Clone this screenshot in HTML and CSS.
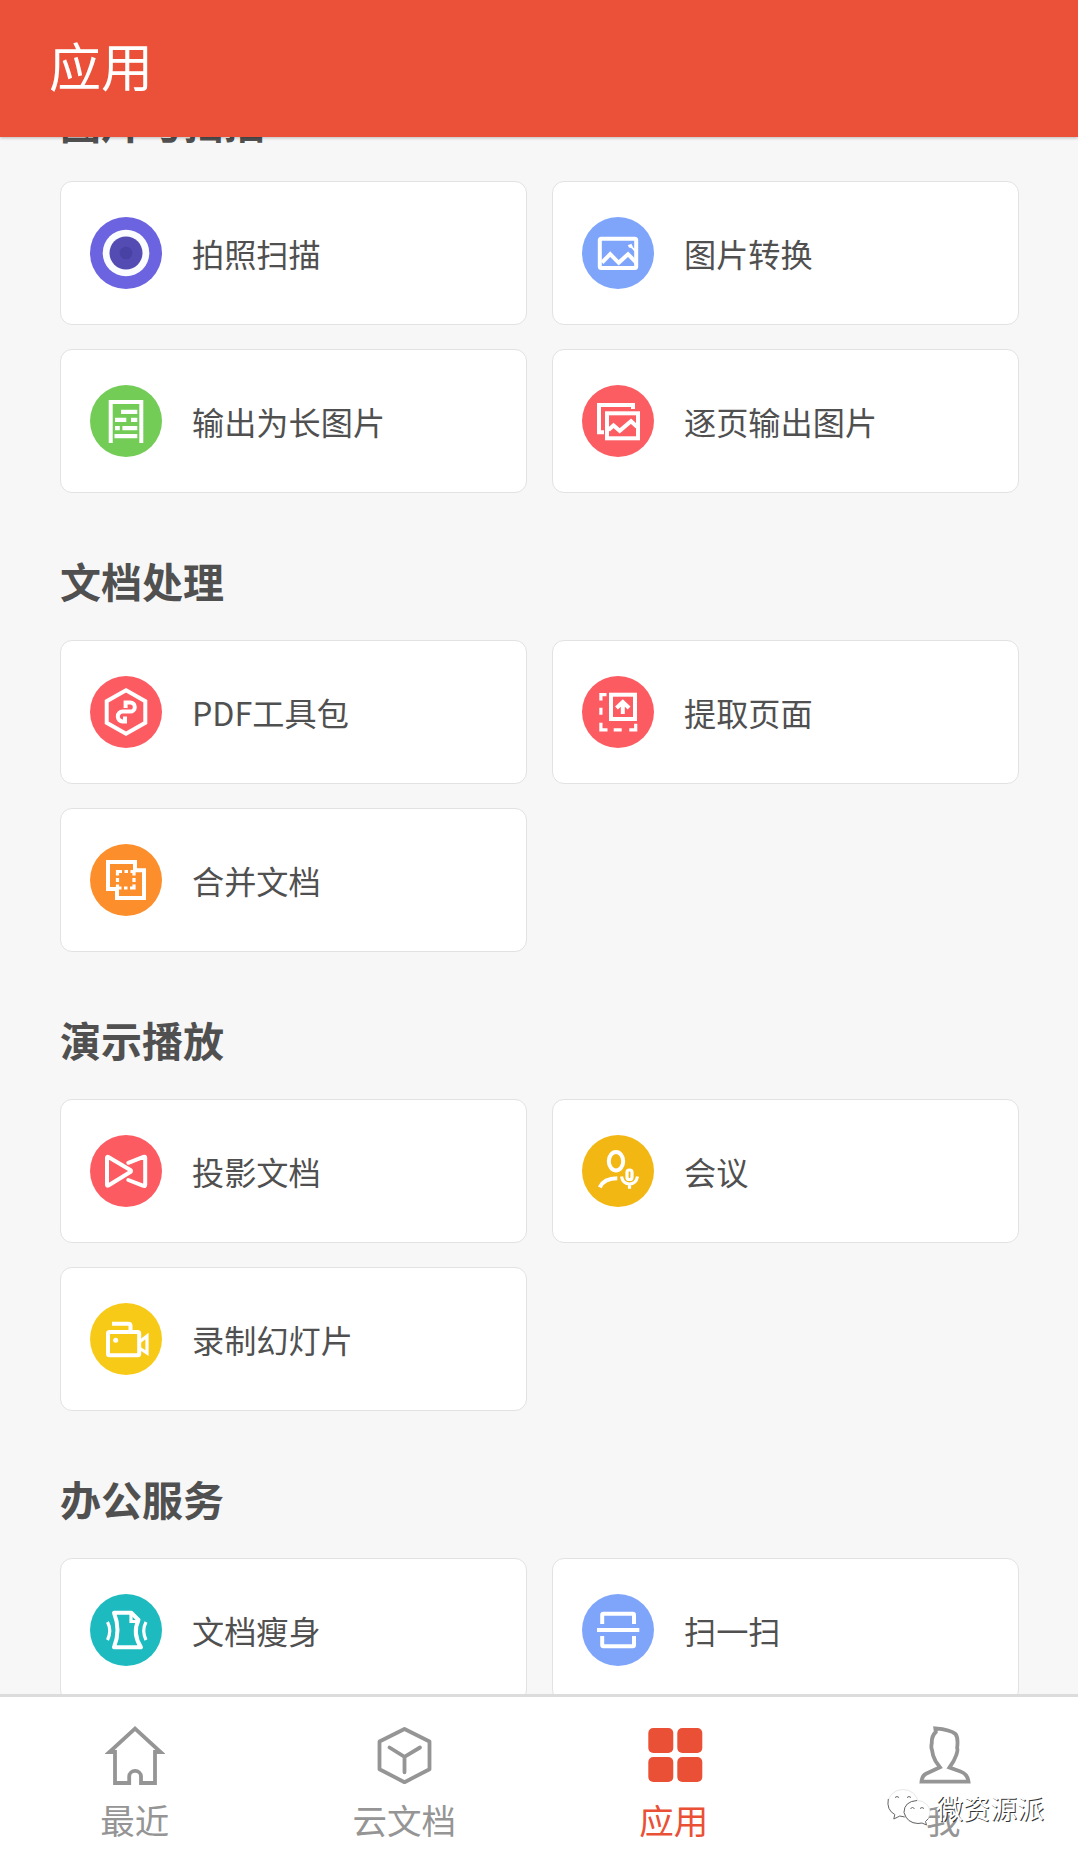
FILE: index.html
```html
<!DOCTYPE html>
<html lang="zh-CN">
<head>
    <meta charset="UTF-8">
    <meta name="viewport" content="width=device-width, initial-scale=1.0">
    <title>应用</title>
    <link rel="stylesheet" href="styles.css">
</head>
<body>
    <div class="app">
        <!-- 顶部标题 -->
        <header class="app-header">
            <h1 class="app-title">应用</h1>
        </header>

        <!-- 应用列表 -->
        <main class="app-content">
            <div class="app-scroll">
                <section class="section">
                    <h2 class="section-title">图片与扫描</h2>
                    <div class="card-grid">
                        <a class="card">
                            <svg class="card-icon" viewBox="0 0 72 72">
                                <circle cx="36" cy="36" r="36" fill="#6c63e0"/>
                                <circle cx="36" cy="36" r="23.3" fill="#fafcff"/>
                                <circle cx="36" cy="36" r="16.5" fill="#544bb3"/>
                                <circle cx="36" cy="36" r="6.3" fill="#4842a5"/>
                            </svg>
                            <span class="card-label">拍照扫描</span>
                        </a>
                        <a class="card">
                            <svg class="card-icon" viewBox="0 0 72 72">
                                <circle cx="36" cy="36" r="36" fill="#7fa5fb"/>
                                <g class="line">
                                    <rect x="17.8" y="21.7" width="36.4" height="29.3" rx="1.5"/>
                                    <path d="M20 45.5l8.2-8.3 8.5 8.6 9.3-8.6 8.5 8.6"/>
                                </g>
                                <path d="M45.8 28.2l3.6-1.4 1.8 3.6 3 2.6v3.4l-4.6-5.2-2.6-.6z" fill="#fff"/>
                            </svg>
                            <span class="card-label">图片转换</span>
                        </a>
                        <a class="card">
                            <svg class="card-icon" viewBox="0 0 72 72">
                                <circle cx="36" cy="36" r="36" fill="#72cc55"/>
                                <path class="line" d="M20.7 58V17h30.6v41"/>
                                <path d="M31 24.8h16.3V29H31zM25 32.8h11.3V37H25zM41 32.8h6.3V37H41zM25 41h4.8v4.2H25zM32.4 41h14.9v4.2H32.4zM24.5 49h22.8v4.2H24.5z" fill="#fff"/>
                            </svg>
                            <span class="card-label">输出为长图片</span>
                        </a>
                        <a class="card">
                            <svg class="card-icon" viewBox="0 0 72 72">
                                <circle cx="36" cy="36" r="36" fill="#fb5d63"/>
                                <g class="line">
                                    <path d="M51 24v-4H17v27.3h5"/>
                                    <rect x="25" y="28.3" width="31" height="25"/>
                                    <path d="M26.5 45l5-4.5 6.2 5.3L49 36.2l6 5.6"/>
                                </g>
                            </svg>
                            <span class="card-label">逐页输出图片</span>
                        </a>
                    </div>
                </section>

                <section class="section">
                    <h2 class="section-title">文档处理</h2>
                    <div class="card-grid">
                        <a class="card">
                            <svg class="card-icon" viewBox="0 0 72 72">
                                <circle cx="36" cy="36" r="36" fill="#fd5b62"/>
                                <g class="line">
                                    <path d="M36 14.3l19.3 10.9v21.6L36 57.7 16.7 46.8V25.2z"/>
                                    <path d="M35.6 32v-5.6h4.6a4.6 4.6 0 0 1 0 9.2h-7.6a4.8 4.8 0 0 0-4.8 4.8v.2a4.8 4.8 0 0 0 4.8 4.8h2.4v-4.8"/>
                                </g>
                            </svg>
                            <span class="card-label">PDF工具包</span>
                        </a>
                        <a class="card">
                            <svg class="card-icon" viewBox="0 0 72 72">
                                <circle cx="36" cy="36" r="36" fill="#fd5b62"/>
                                <g class="line">
                                    <rect x="29" y="18.7" width="24" height="24.3"/>
                                    <path d="M40.8 38V26M34.5 32l6.3-6 6.3 6"/>
                                </g>
                                <path class="line thin" d="M24.5 18.6h-5.6v6M18.9 31.7v7M18.9 46.7v7.1h6.6M31.7 53.8h8M47.3 53.8h6.4v-6"/>
                            </svg>
                            <span class="card-label">提取页面</span>
                        </a>
                        <a class="card">
                            <svg class="card-icon" viewBox="0 0 72 72">
                                <circle cx="36" cy="36" r="36" fill="#fd8e2c"/>
                                <path class="line" d="M18 18h27v8.3h9V54H27v-9h-9z"/>
                                <path class="line thin" d="M27.5 31.500v-4h4.500M34.500 27.500h3.500M40.500 27.500h3.500v4M44 34v4M44 40.500V44h-4M37.500 44H34M31.500 44h-4v-3.500M27.500 38v-4"/>
                            </svg>
                            <span class="card-label">合并文档</span>
                        </a>
                    </div>
                </section>

                <section class="section">
                    <h2 class="section-title">演示播放</h2>
                    <div class="card-grid">
                        <a class="card">
                            <svg class="card-icon" viewBox="0 0 72 72">
                                <circle cx="36" cy="36" r="36" fill="#fd5b62"/>
                                <path class="line round" d="M17 22.8q0-1.5 1.3-.8l22 13q1.4 1 0 2l-22 13.5q-1.3.7-1.3-.8zM38.3 27.8l15.2-6q1.7-.6 1.7 1v27q0 1.800-1.700 1L38.3 45"/>
                            </svg>
                            <span class="card-label">投影文档</span>
                        </a>
                        <a class="card">
                            <svg class="card-icon" viewBox="0 0 72 72">
                                <circle cx="36" cy="36" r="36" fill="#f2b713"/>
                                <g class="line">
                                    <ellipse cx="34" cy="26.2" rx="7.2" ry="9.2"/>
                                    <path d="M17.800 52.300Q22 43.300 35.300 43.300"/>
                                </g>
                                <g class="line thin">
                                    <rect x="45" y="35" width="5" height="9.500" rx="2.300"/>
                                    <path d="M39.500 41.500q1.500 7.500 8 7.500t8-7.500M47.500 49v4.800"/>
                                </g>
                            </svg>
                            <span class="card-label">会议</span>
                        </a>
                        <a class="card">
                            <svg class="card-icon" viewBox="0 0 72 72">
                                <circle cx="36" cy="36" r="36" fill="#f8ca18"/>
                                <g class="line">
                                    <rect x="18" y="29" width="31.200" height="23.300" rx="1.500"/>
                                    <path d="M22 20.800h16.500q2 0 2 2V28"/>
                                </g>
                                <path class="line thin" d="M50 38.500l7-5.500v17l-7-4.500"/>
                                <circle cx="25.700" cy="37.300" r="2.500" fill="#fff"/>
                            </svg>
                            <span class="card-label">录制幻灯片</span>
                        </a>
                    </div>
                </section>

                <section class="section">
                    <h2 class="section-title">办公服务</h2>
                    <div class="card-grid">
                        <a class="card">
                            <svg class="card-icon" viewBox="0 0 72 72">
                                <circle cx="36" cy="36" r="36" fill="#1dbbbf"/>
                                <path class="line round" d="M24 18.800h17.500l7 7.200q-6.500 13.500 2.500 27.300H24q7-17 0-34.500z"/>
                                <path class="line thin" d="M41 19.500v8h7.500M17.500 28q4.500 8.500 0 18M56 28q-4.500 8.500 0 18"/>
                            </svg>
                            <span class="card-label">文档瘦身</span>
                        </a>
                        <a class="card">
                            <svg class="card-icon" viewBox="0 0 72 72">
                                <circle cx="36" cy="36" r="36" fill="#7fa5fb"/>
                                <path class="line" d="M20.200 30v-9q0-1.300 1.300-1.300h29.200q1.300 0 1.300 1.300v9M15 36h42.300M20.200 42v9q0 1.300 1.300 1.300h29.200q1.300 0 1.300-1.300v-9"/>
                            </svg>
                            <span class="card-label">扫一扫</span>
                        </a>
                    </div>
                </section>
            </div>
        </main>

        <!-- 底部导航 -->
        <nav class="tab-bar">
            <a class="tab">
                <svg class="tab-icon" viewBox="0 0 60 60">
                    <path d="M30 2.600L4.500 26H10v31h14.200v-6.500a5.900 5.600 0 0 1 11.800 0V57h14V26h5.500z"/>
                </svg>
                <span class="tab-label">最近</span>
            </a>
            <a class="tab">
                <svg class="tab-icon" viewBox="0 0 60 60">
                    <path d="M30.500 3l25 12.500v27.700l-25 13-25-13V15.500z" stroke-linejoin="round"/>
                    <path d="M15.500 21.500l15 9.300L46 21.500M30.500 30.800v15.500" stroke-linecap="round"/>
                </svg>
                <span class="tab-label">云文档</span>
            </a>
            <a class="tab active">
                <svg class="tab-icon" viewBox="0 0 60 60">
                    <rect x="4.300" y="2" width="25" height="25" rx="5"/>
                    <rect x="33.300" y="2" width="25" height="25" rx="5"/>
                    <rect x="4.300" y="31" width="25" height="25" rx="5"/>
                    <rect x="33.300" y="31" width="25" height="25" rx="5"/>
                </svg>
                <span class="tab-label">应用</span>
            </a>
            <a class="tab">
                <svg class="tab-icon" viewBox="0 0 60 60">
                    <path d="M27 41.300L22.500 35q-3-5.500-3.500-11-1.200-2.500-.2-7-.3-7 4-11l-.5-3.700Q37.500 3.500 42.500 8q3 4 1.600 14 1 2-.8 7-2 6-6.800 12.500l11 4q7 2.500 8 10.200H8.500q.5-6 4.500-8z"/>
                </svg>
                <span class="tab-label">我</span>
            </a>
        </nav>

        <!-- 公众号水印 -->
        <div class="watermark">
            <svg class="watermark-icon" viewBox="0 0 46 38">
                <ellipse cx="17" cy="14" rx="15" ry="13.500" fill="#fff" stroke="#ddd" stroke-width=".7"/>
                <path d="M2.300 10q-2 11 6.500 15.500l-1 4.500 6-3 5 1" fill="#fff" stroke="#666"/>
                <ellipse cx="31" cy="23" rx="13" ry="11.500" fill="#fff" stroke="#ddd" stroke-width=".7"/>
                <path d="M31 11.500q-13 1-13 12 3 10.500 14 11l4-.5 4.500 2-1-3.500 3-3" fill="#fff" stroke="#666"/>
                <path d="M9 8.500q2-2 4 0M21 8.500q2-2 4 0M24.500 19.500q2-2 4 0M34 19.500q2-2 4 0" fill="none" stroke="#666"/>
            </svg>
            <span class="watermark-text">微资源派</span>
        </div>
    </div>
</body>
</html>
```

FILE: styles.css
```css
* {
    margin: 0;
    padding: 0;
    box-sizing: border-box;
}

body {
    font-family: "Noto Sans CJK SC", "Noto Sans", sans-serif;
    background: #f7f7f7;
    color: #505050;
    overflow: hidden;
}

.app {
    position: relative;
    height: 100vh;
    display: flex;
    flex-direction: column;
}

/* 顶部标题 */
.app-header {
    height: 137px;
    flex-shrink: 0;
    display: flex;
    align-items: center;
    padding: 0 49px 8px;
    background: #eb5138;
    color: #fff;
    box-shadow: 0 1px 3px rgba(0, 0, 0, 0.25);
    z-index: 1;
}

.app-title {
    font-size: 52px;
    font-weight: 400;
}

/* 应用列表 */
.app-content {
    flex: 1;
    min-height: 0;
    overflow: hidden;
}

.app-scroll {
    margin-top: -103px;
    padding: 0 59px 0 60px;
}

.section-title {
    padding: 57px 0 30px;
    font-size: 41px;
    line-height: 60px;
    font-weight: 700;
}

.card-grid {
    display: grid;
    grid-template-columns: 1fr 1fr;
    gap: 24px 25px;
}

.card {
    height: 144px;
    display: flex;
    align-items: center;
    gap: 30px;
    padding: 0 29px;
    background: #fff;
    border: 1px solid #e2e2e2;
    border-radius: 12px;
}

.card-icon {
    width: 72px;
    height: 72px;
    flex-shrink: 0;
}

.card-label {
    font-size: 32.2px;
    white-space: nowrap;
}

.line {
    fill: none;
    stroke: #fff;
    stroke-width: 4;
}

.thin {
    stroke-width: 3.2;
}

.round {
    stroke-linejoin: round;
    stroke-linecap: round;
}

/* 底部导航 */
.tab-bar {
    height: 157px;
    flex-shrink: 0;
    display: flex;
    background: #fff;
    border-top: 3px solid #dcdcdc;
}

.tab {
    flex: 1;
    display: flex;
    flex-direction: column;
    align-items: center;
    gap: 13px;
    padding-top: 29px;
    color: #959595;
}

.tab-icon {
    width: 60px;
    height: 60px;
    fill: none;
    stroke: currentColor;
    stroke-width: 3.8;
}

.tab-label {
    font-size: 34.5px;
    line-height: 40px;
}

.tab.active {
    color: #ea5036;
}

.tab.active .tab-icon {
    fill: currentColor;
    stroke: none;
}

/* 水印 */
.watermark {
    position: absolute;
    left: 886px;
    top: 1789px;
    display: flex;
    align-items: center;
    gap: 4px;
    z-index: 2;
}

.watermark-icon {
    width: 46px;
    height: 38px;
}

.watermark-text {
    font-size: 27px;
    line-height: 38px;
    color: #fff;
    text-shadow: 1px 1px 0 #333;
}
```
